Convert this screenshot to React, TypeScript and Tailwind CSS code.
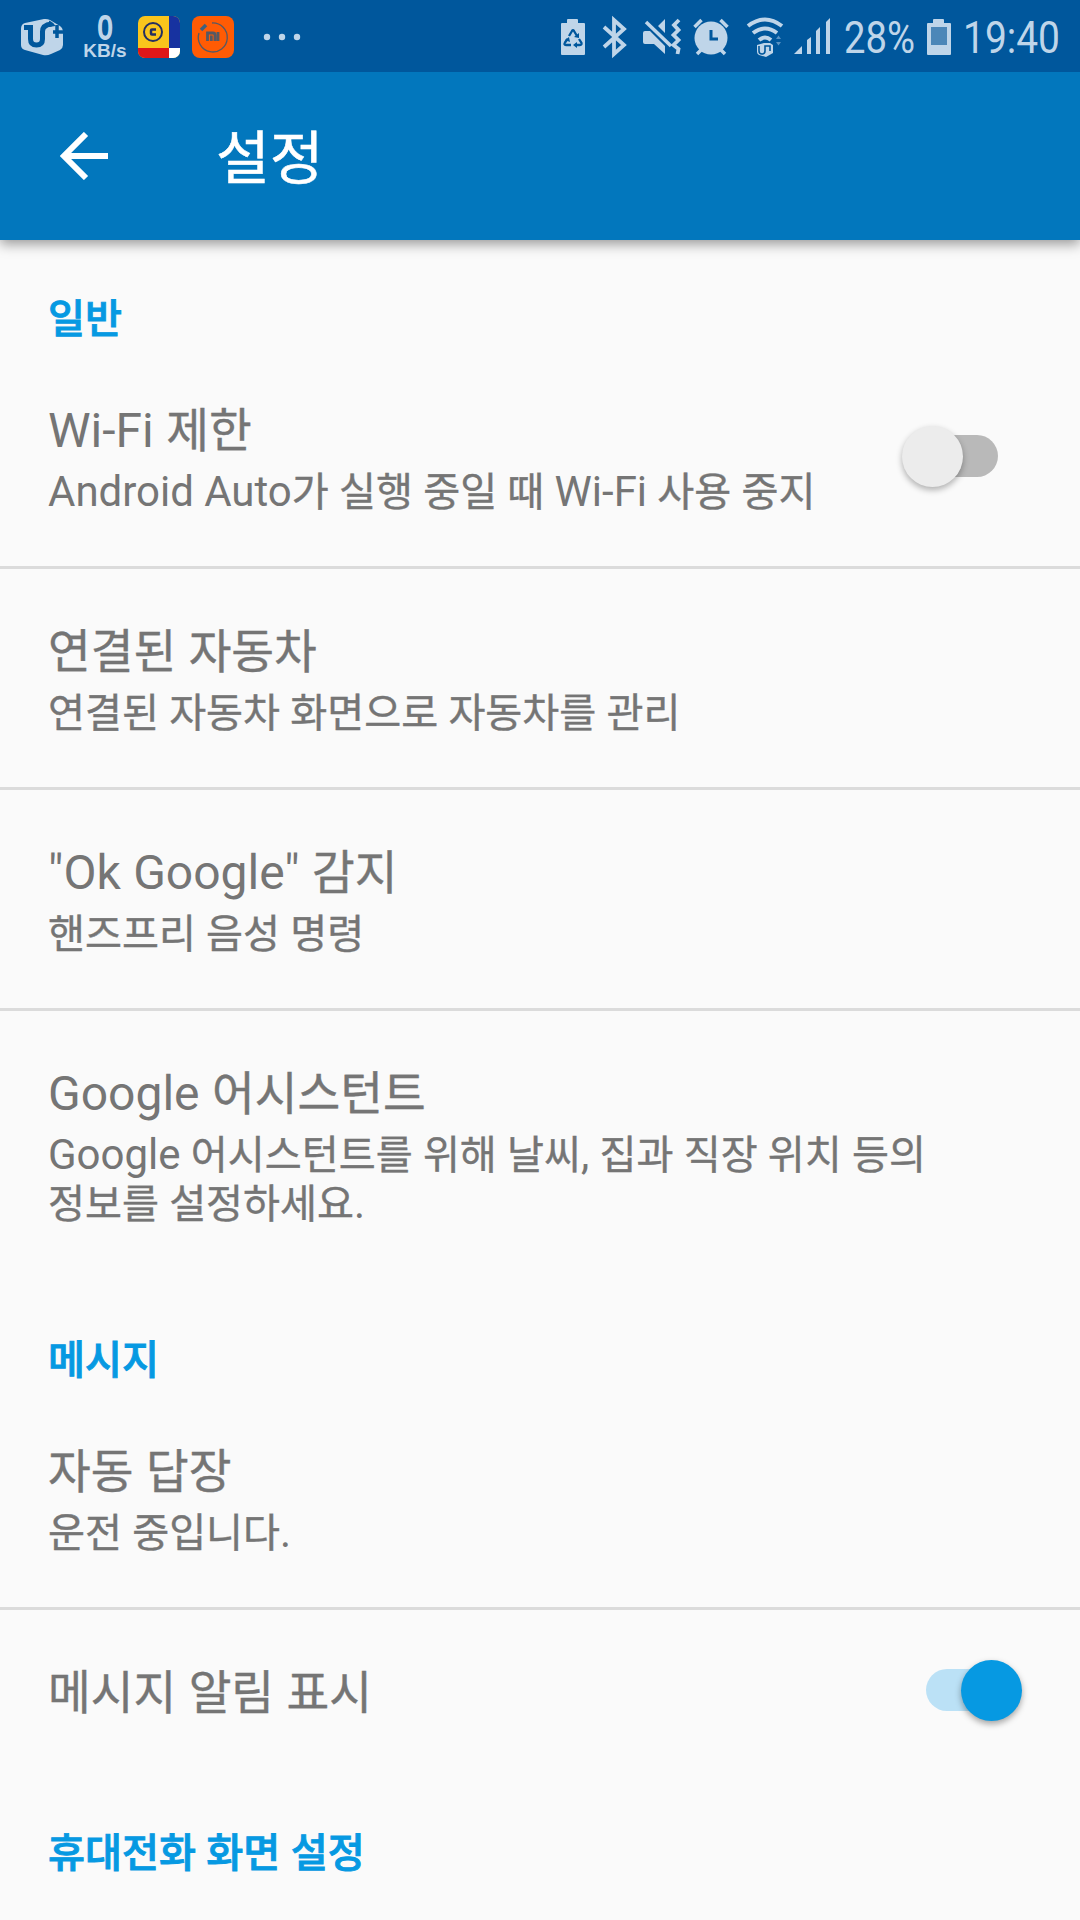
import React, { FC, ReactNode } from 'react'

const HANGUL = /([\u3131-\u318e\uac00-\ud7a3]+)/

type TextProps = {
    children: string
    className?: string
}

const Text: FC<TextProps> = ({ children, className = 'text-[0.957em] [-webkit-text-stroke:0.4px]' }) => (
    <>
        {children.split(HANGUL).map((part, i) =>
            HANGUL.test(part) ? (
                <span key={i} className={`leading-none ${className}`}>{part}</span>
            ) : (
                part
            )
        )}
    </>
)

const Section: FC<{ title: string; children?: ReactNode }> = ({ title, children }) => (
    <section>
        <h2 className="h-[108px] pt-[54px] px-12 text-[42px] leading-[49px] font-medium text-[#0699e2]">
            <Text className="text-[0.957em] [-webkit-text-stroke:0.9px]">{title}</Text>
        </h2>
        {children}
    </section>
)

type RowProps = {
    title: string
    lines?: string[]
    divider?: boolean
    className?: string
    children?: ReactNode
}

const Row: FC<RowProps> = ({ title, lines = [], divider, className = 'pb-[50px]', children }) => (
    <div className={`flex justify-between pt-[55px] pl-12 ${className} ${divider ? 'border-b-[3px] border-[#dbdbdb]' : ''}`}>
        <div>
            <h3 className="text-[48px] leading-[56px] [word-spacing:0.5px]">
                <Text className="text-[0.968em] [-webkit-text-stroke:0.4px]">{title}</Text>
            </h3>
            {lines.length > 0 && (
                <div className="mt-2 text-[42px] leading-[49px] whitespace-nowrap [word-spacing:-0.2px]">
                    {lines.map((line) => (
                        <p key={line}>
                            <Text>{line}</Text>
                        </p>
                    ))}
                </div>
            )}
        </div>
        {children}
    </div>
)

const StatusBar: FC = () => (
    <header className="relative z-10 flex h-[72px] items-center bg-[#00579c] text-[#bfd5e9]">
        <svg className="mt-px ml-5 h-[38px] w-11" viewBox="0 0 44 38">
            <path d="M5 5 24 1q3-.5 6 1l10 6q3 2 3 5v14q0 3-3 5l-9 4q-4 2-8 1L5 32q-4-1-4-5V11q0-5 4-6Z" fill="currentColor" />
            <path d="M4 9.500h6.500V21q0 6 6 6t6-6v-7.500q0-6.500 9-7.500" fill="none" stroke="#00579c" strokeWidth="5" />
            <path d="M29 2.500q4 1.500 6.500 5.500L29 9Z" fill="#00579c" />
            <path d="M37 7v13M33 14h10" fill="none" stroke="#00579c" strokeWidth="3.500" />
        </svg>
        <div className="mt-0.5 ml-5 flex w-[42px] flex-col items-center font-['Liberation_Sans'] font-bold">
            <svg className="h-6 w-4 overflow-visible" fill="currentColor">
                <text x="8" y="24" textAnchor="middle" className="text-[33px] font-normal [stroke:currentColor] [stroke-width:1.8px]" transform="translate(1.600 0) scale(0.8 1)">0</text>
            </svg>
            <span className="mt-[3px] text-[19px] leading-[18px]">KB/s</span>
        </div>
        <svg className="mt-0.5 ml-3 h-[42px] w-[42px] rounded-[7px]" viewBox="0 0 42 42">
            <rect width="42" height="42" fill="#fac51c" />
            <rect x="31" width="11" height="32" fill="#1732a0" />
            <rect y="32" width="31" height="10" fill="#df1719" />
            <rect x="31" y="32" width="11" height="10" fill="#fff" />
            <circle cx="15" cy="16" r="9" fill="none" stroke="#252f61" strokeWidth="2" />
            <path d="M18 13.500h-4q-1 0-1 1v3q0 1 1 1h4" fill="none" stroke="#252f61" strokeWidth="2.500" />
        </svg>
        <svg className="mt-0.5 ml-3 h-[42px] w-[42px] rounded-lg" viewBox="0 0 42 42">
            <rect width="42" height="42" fill="#ff5b04" />
            <path d="M20 7A14.500 14.500 0 1 1 7 17" fill="none" stroke="#555964" strokeWidth="1.300" />
            <path d="m9 14 5-5" stroke="#3f607e" strokeWidth="3.500" />
            <path d="M15.500 25v-8H21q2 0 2 2v6M19.300 19.500V25M26 16v9" fill="none" stroke="#555964" strokeWidth="2.800" />
        </svg>
        <svg className="mt-0.5 ml-[29px] h-2 w-[38px]" viewBox="0 0 38 8" fill="currentColor">
            <circle cx="4" cy="4" r="3.200" />
            <circle cx="19" cy="4" r="3.200" />
            <circle cx="34" cy="4" r="3.200" />
        </svg>

        <svg className="ml-auto h-[72px] w-[276px]" viewBox="0 0 276 72" fill="none" stroke="currentColor">
            {/* power saving battery */}
            <path d="M6 23V20q0-1 1-1h9q1 0 1 1v3h6q1 0 1 1v30q0 1-1 1H1q-1 0-1-1V24q0-1 1-1Z" fill="currentColor" stroke="none" />
            <path d="m8 36 3-5q1-1.500 2 0l3 5M18 39l2.500 4q.5 2-2 2H14M10 45H5q-2.500 0-1-2.500L6.500 39" stroke="#00579c" strokeWidth="2.300" />
            <path d="m13 37 5 1V33ZM16 42v6l-4-3ZM4 40l4-3 1 5Z" fill="#00579c" stroke="none" />
            {/* bluetooth */}
            <path d="m43 27 20 18-10 9V20l10 9-20 18" strokeWidth="3.800" />
            {/* muted, vibrating */}
            <path d="M84 31h5l15 15v8L93 44H84q-2 0-2-2v-9q0-2 2-2ZM97 26l7-7v14Z" fill="currentColor" stroke="none" />
            <path d="m85 22 25 24" strokeWidth="3.500" />
            <path d="m118 20-5 5 4.500 5-5 5 5 5-5 5 5 4-1 5" strokeWidth="3.800" />
            {/* alarm */}
            <circle cx="150" cy="38" r="16.500" fill="currentColor" stroke="none" />
            <path d="m133.500 27 7-7M159.500 20l7 7M141 49l-5 5M159 49l5 5" strokeWidth="3.500" />
            <path d="M150 30v9h7" stroke="#00579c" strokeWidth="3" />
            {/* wifi */}
            <path d="M187 26q17-13 34 0M192 33q12-9 24 0M198 40q6-5 12 0" strokeWidth="4" />
            <path d="m196 45 7-2h6l3 2v8l-7 4-7-2q-2-1-2-3Z" fill="currentColor" stroke="none" />
            <path d="M198 46v5q0 3 3 3t3-3v-5h5v5" stroke="#00579c" strokeWidth="1.600" />
            <path d="m215 39 2.500-3.500L220 39ZM215 42l2.500 3.500L220 42Z" fill="#5b93c3" stroke="none" />
            {/* signal */}
            <path d="m233 54 8-8v8ZM246 54V40l4-3v17ZM255 54V31l4-4v27ZM265 54V22l4-4v36Z" fill="currentColor" stroke="none" />
        </svg>
        <span className="mt-1 ml-[7px] w-[70px] origin-left scale-x-[0.85] text-[45px]">28%</span>
        <svg className="mt-0.5 ml-[13px] h-9 w-6" viewBox="0 0 24 36">
            <path d="M6 4V1q0-1 1-1h9q1 0 1 1v3h6q1 0 1 1v30q0 1-1 1H1q-1 0-1-1V5q0-1 1-1Z" fill="currentColor" />
            <rect x="4" y="8" width="16" height="18" fill="#4c87b8" />
        </svg>
        <span className="mt-1 ml-3 w-[117px] origin-left scale-x-[0.865] text-[45px]">19:40</span>
    </header>
)

export default function App() {
    return (
        <main className="h-[1920px] w-[1080px] overflow-hidden bg-[#fafafa] font-[Roboto,'Noto_Sans_CJK_KR',sans-serif] text-[#757575]">
            <StatusBar />
            <div className="relative flex h-[168px] items-center bg-[#0277bd] text-white shadow-[0_4px_12px_rgba(0,0,0,0.4)]">
                <svg className="ml-[60px] h-12 w-12" viewBox="0 0 48 48" fill="none" stroke="currentColor" strokeWidth="6">
                    <path d="M48 24H5M26 2 4 24l22 22" />
                </svg>
                <h1 className="mt-1.5 ml-[108px] text-[60px] leading-[70px]">
                    <Text className="text-[0.974em] [-webkit-text-stroke:0.5px]">설정</Text>
                </h1>
            </div>

            <Section title="일반">
                <Row title="Wi-Fi 제한" lines={['Android Auto가 실행 중일 때 Wi-Fi 사용 중지']} divider>
                    <div className="relative mt-[32px] mr-[82px] h-[42px] w-[84px] rounded-full bg-[#b9b9b9]">
                        <span className="absolute -top-[9px] -left-[12px] size-[61px] rounded-full bg-[#ececec] shadow-[0_3px_6px_rgba(0,0,0,0.3)]" />
                    </div>
                </Row>
                <Row title="연결된 자동차" lines={['연결된 자동차 화면으로 자동차를 관리']} divider />
                <Row title={'"Ok Google" 감지'} lines={['핸즈프리 음성 명령']} divider />
                <Row title="Google 어시스턴트" lines={['Google 어시스턴트를 위해 날씨, 집과 직장 위치 등의', '정보를 설정하세요.']} className="pb-[53px]" />
            </Section>
            <Section title="메시지">
                <Row title="자동 답장" lines={['운전 중입니다.']} divider />
                <Row title="메시지 알림 표시" className="pb-[53px]">
                    <div className="relative mt-[4px] mr-[70px] h-[42px] w-[84px] rounded-full bg-[#bbe1f6]">
                        <span className="absolute -top-[9px] -right-[12px] size-[61px] rounded-full bg-[#0699e2] shadow-[0_3px_6px_rgba(0,0,0,0.35)]" />
                    </div>
                </Row>
            </Section>
            <Section title="휴대전화 화면 설정" />
        </main>
    )
}
